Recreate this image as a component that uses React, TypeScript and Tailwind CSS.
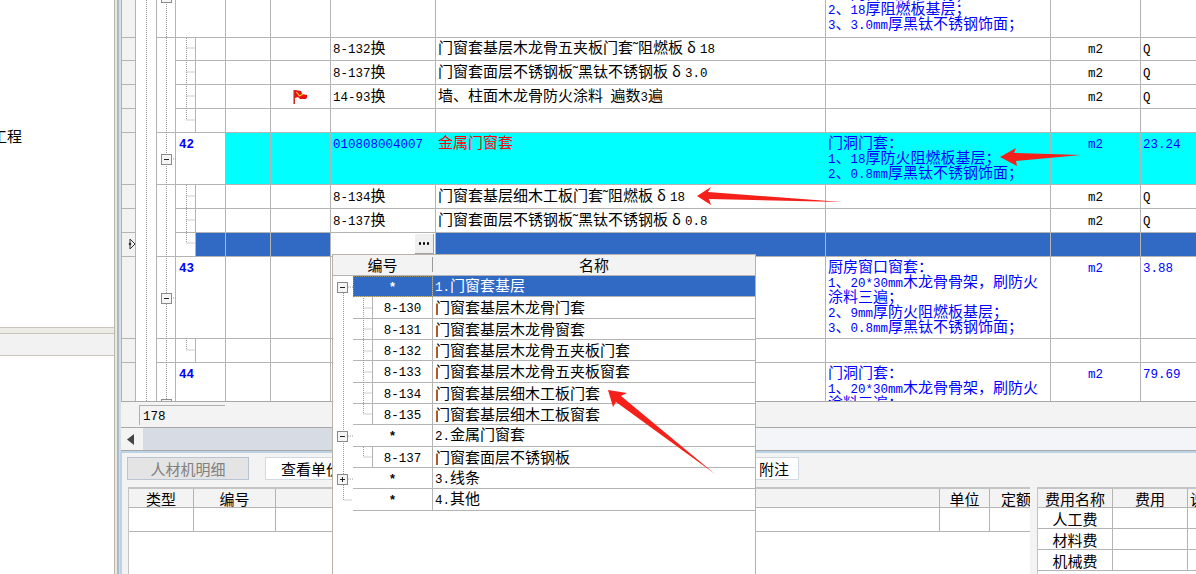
import React from "react";

const CJK = "font-['Noto_Sans_CJK_SC',sans-serif]";

function Mixed({ text }: { text: string }) {
  const parts = text.match(/[\x00-\x7f]+|δ|[^\x00-\x7fδ]+/g) ?? [];
  return (
    <span className="whitespace-pre">
      {parts.map((p, i) =>
        /^[\x00-\x7f]/.test(p) ? (
          <span key={i} className="font-['Liberation_Mono',monospace] text-[12.5px]">
            {p}
          </span>
        ) : p === "δ" ? (
          <span key={i} className="px-[4px]">{p}</span>
        ) : (
          <span key={i}>{p}</span>
        )
      )}
    </span>
  );
}

type RowData = {
  h: number;
  treeEnd?: boolean;
  sub?: boolean;
  num?: string;
  flag?: boolean;
  code?: string;
  name?: string;
  note?: string[];
  unit?: string;
  qty?: string;
  kind?: "cyan" | "sel" | "item" | "head";
  noteShift?: boolean;
};

const rows: RowData[] = [
  { h: 38, kind: "head", note: ["1、门窗基层木龙骨；", "2、18厚阻燃板基层；", "3、3.0mm厚黑钛不锈钢饰面；"], noteShift: true },
  { h: 23, sub: true, code: "8-132换", name: "门窗套基层木龙骨五夹板门套˜阻燃板δ18", unit: "m2", qty: "Q" },
  { h: 24, sub: true, code: "8-137换", name: "门窗套面层不锈钢板˜黑钛不锈钢板δ3.0", unit: "m2", qty: "Q" },
  { h: 24, sub: true, flag: true, code: "14-93换", name: "墙、柱面木龙骨防火涂料 遍数3遍", unit: "m2", qty: "Q" },
  { h: 24, sub: true, treeEnd: true },
  { h: 52, kind: "cyan", num: "42", code: "010808004007", name: "金属门窗套", note: ["门洞门套：", "1、18厚防火阻燃板基层；", "2、0.8mm厚黑钛不锈钢饰面；"], unit: "m2", qty: "23.24" },
  { h: 24, sub: true, code: "8-134换", name: "门窗套基层细木工板门套˜阻燃板δ18", unit: "m2", qty: "Q" },
  { h: 24, sub: true, code: "8-137换", name: "门窗套面层不锈钢板˜黑钛不锈钢板δ0.8", unit: "m2", qty: "Q" },
  { h: 24, sub: true, treeEnd: true, kind: "sel" },
  { h: 82, kind: "head", num: "43", note: ["厨房窗口窗套：", "1、20*30mm木龙骨骨架，刷防火", "涂料三遍；", "2、9mm厚防火阻燃板基层；", "3、0.8mm厚黑钛不锈钢饰面；"], unit: "m2", qty: "3.88" },
  { h: 24, sub: true, treeEnd: true },
  { h: 39, kind: "head", num: "44", note: ["门洞门套：", "1、20*30mm木龙骨骨架，刷防火", "涂料三遍；"], unit: "m2", qty: "79.69" },
];

function GridRow({ r }: { r: RowData }) {
  const cyan = r.kind === "cyan";
  const sel = r.kind === "sel";
  const fill = cyan ? "bg-[#00ffff]" : sel ? "bg-[#316ac5]" : "bg-white";
  const cell = `h-full shrink-0 border-r border-b border-[#b4b4b4] overflow-hidden ${fill}`;
  const blue = r.kind === "cyan" || r.kind === "head";
  const align = blue ? "items-start pt-[1px]" : "items-center pb-[2px]";
  return (
    <div className="flex shrink-0 overflow-hidden" style={{ height: r.h }}>
      <div className="h-full w-[15px] shrink-0 border-b border-x border-[#b4b4b4] bg-[#f2f2f2]" />
      <div className="h-full w-[20px] shrink-0 bg-white" />
      <div className={`h-full w-[20px] shrink-0 border-l border-r bg-white border-[#b4b4b4] ${r.sub && !r.treeEnd && !sel ? "" : "border-b"}`} />
      {r.sub ? (
        <>
          <div className="h-full w-[20px] shrink-0 border-r border-b border-[#b4b4b4] bg-white" />
          <div className={`w-[30px] ${cell}`} />
        </>
      ) : (
        <div className={`w-[50px] pl-[3px] border-r border-b border-[#b4b4b4] h-full shrink-0 bg-white text-[#0000ff] font-bold flex ${align}`}>
          {r.num && <Mixed text={r.num} />}
        </div>
      )}
      <div className={`w-[45px] ${cell}`} />
      <div className={`w-[60px] ${cell} flex items-center justify-center`}>
        {r.flag && (
          <svg width="15" height="15" viewBox="0 0 15 15" aria-hidden="true">
            <rect x="0.5" y="1" width="1.4" height="14" fill="#d01010" />
            <path d="M2 1 L8 2 L9 5 L14 6 Q15 8 13 10 L7 10 L5 8 L2 9 Z" fill="#e81010" />
            <path d="M3.5 3 L6.5 7 L10 5" fill="none" stroke="#f5d020" strokeWidth="1.2" />
          </svg>
        )}
      </div>
      <div className={`w-[105px] pl-[2px] flex ${sel ? "justify-end pr-[1px] pt-[1px] items-start !bg-white" : align} ${cell} ${cyan ? "text-[#0000ff]" : "text-black"}`}>
        {r.code && <Mixed text={r.code} />}
        {sel && (
          <div className="w-[19px] h-[20px] bg-[#efefef] border-r border-b border-[#a0a0a0] flex items-center justify-center gap-[1.5px]">
            <span className="size-[2.5px] bg-black rounded-full" />
            <span className="size-[2.5px] bg-black rounded-full" />
            <span className="size-[2.5px] bg-black rounded-full" />
          </div>
        )}
      </div>
      <div className={`w-[390px] pl-[2px] flex ${align} ${cell} ${cyan ? "text-[#ff0000]" : "text-black"}`}>
        {r.name && <Mixed text={r.name} />}
      </div>
      <div className={`w-[225px] pl-[2px] ${cell} text-[#0000ff]`}>
        {r.note && (
          <div className={r.noteShift ? "-mt-[15px]" : "pt-[1px]"}>
            {r.note.map((n) => (
              <div key={n} className="h-[15px] leading-[15px] whitespace-nowrap">
                <Mixed text={n} />
              </div>
            ))}
          </div>
        )}
      </div>
      <div className={`w-[90px] flex justify-center ${align} ${cell} ${blue ? "text-[#0000ff]" : "text-black"}`}>
        {r.unit && <Mixed text={r.unit} />}
      </div>
      <div className={`flex-1 pl-[2px] flex ${align} ${cell} border-r-0 ${blue ? "text-[#0000ff]" : "text-black"}`}>
        {r.qty && <Mixed text={r.qty} />}
      </div>
    </div>
  );
}

function Box({ x, y, plus }: { x: number; y: number; plus?: boolean }) {
  return (
    <g>
      <rect x={x + 0.5} y={y + 0.5} width="10" height="10" fill="#f5f5f5" stroke="#8a8a8a" />
      <path d={`M${x + 3} ${y + 5.5}H${x + 8}`} stroke="#222" />
      {plus && <path d={`M${x + 5.5} ${y + 3}V${y + 8}`} stroke="#222" />}
    </g>
  );
}

const dot = { stroke: "#9a9a9a", strokeDasharray: "1 1", fill: "none" } as const;

function GridTree() {
  return (
    <svg className="absolute left-0 top-0 pointer-events-none" width="90" height="402" aria-hidden="true">
      <path d="M25.5 0V402M45.5 0V402" {...dot} />
      <path d="M65.5 38V120H74M65.5 48H74M65.5 72H74M65.5 96H74" {...dot} />
      <path d="M65.5 185V243H74M65.5 196H74M65.5 220H74" {...dot} />
      <path d="M65.5 338V350H74" {...dot} />
      <path d="M50 159H55M50 298H55" {...dot} />
      <Box x={40} y={-8} />
      <Box x={40} y={154} />
      <Box x={40} y={293} />
      <Box x={40} y={399} />
      <path d="M9 239L14 244L9 249Z" fill="#f2f2f2" stroke="#333" />
      <circle cx="9" cy="244" r="1.3" fill="#333" />
    </svg>
  );
}

const popupRows: { sub?: boolean; code: string; name: string; sel?: boolean }[] = [
  { code: "*", name: "1.门窗套基层", sel: true },
  { sub: true, code: "8-130", name: "门窗套基层木龙骨门套" },
  { sub: true, code: "8-131", name: "门窗套基层木龙骨窗套" },
  { sub: true, code: "8-132", name: "门窗套基层木龙骨五夹板门套" },
  { sub: true, code: "8-133", name: "门窗套基层木龙骨五夹板窗套" },
  { sub: true, code: "8-134", name: "门窗套基层细木工板门套" },
  { sub: true, code: "8-135", name: "门窗套基层细木工板窗套" },
  { code: "*", name: "2.金属门窗套" },
  { sub: true, code: "8-137", name: "门窗套面层不锈钢板" },
  { code: "*", name: "3.线条" },
  { code: "*", name: "4.其他" },
];

function Popup() {
  return (
    <div className="absolute left-[332px] top-[254px] w-[424px] h-[330px] bg-white border border-[#b7b3a6] text-black z-10">
      <div className="flex h-[21px] bg-[#f3f3f3] border-b border-[#b4b4b4] items-center pb-[1px]">
        <div className="w-[100px] text-center border-r border-[#9a9a9a] h-[15px] leading-[15px]">编号</div>
        <div className="flex-1 text-center leading-[15px]">名称</div>
      </div>
      {popupRows.map((r) => (
        <div key={r.name} className="flex h-[21.33px]">
          <div className="w-[20px] shrink-0" />
          {r.sub && <div className="w-[20px] shrink-0 border-r border-b border-[#b4b4b4]" />}
          <div
            className={`${r.sub ? "w-[60px]" : "w-[80px]"} shrink-0 flex items-center justify-center pb-[1px] border-r border-b border-[#b4b4b4] ${
              r.sel ? "bg-[#316ac5] text-white outline-1 -outline-offset-1 outline-dotted outline-[#9a8f60]" : ""
            }`}
          >
            <span className={r.code === "*" ? "font-bold" : ""}>
              <Mixed text={r.code} />
            </span>
          </div>
          <div
            className={`flex-1 pl-[2px] pb-[1px] flex items-center border-b border-[#b4b4b4] ${
              r.sel ? "bg-[#316ac5] text-white" : ""
            }`}
          >
            <Mixed text={r.name} />
          </div>
        </div>
      ))}
      <svg className="absolute left-0 top-0 pointer-events-none" width="60" height="260" aria-hidden="true">
        <path d="M10.5 28V245H19" {...dot} />
        <path d="M15 32H20M15 181H20M15 224H20" {...dot} />
        <path d="M30.5 43V159H39M30.5 53H39M30.5 74H39M30.5 96H39M30.5 117H39M30.5 138H39" {...dot} />
        <path d="M30.5 192V202H39" {...dot} />
        <Box x={4} y={27} />
        <Box x={4} y={176} />
        <Box x={4} y={219} plus />
      </svg>
    </div>
  );
}

function Th({ w, label, grow }: { w?: number; label?: string; grow?: boolean }) {
  return (
    <div
      className={`h-full flex items-center justify-center overflow-hidden whitespace-nowrap border-r border-[#b4b4b4] ${grow ? "flex-1" : "shrink-0"}`}
      style={w ? { width: w } : undefined}
    >
      {label}
    </div>
  );
}

export default function App() {
  return (
    <div className={`relative flex w-[1196px] h-[574px] overflow-hidden bg-white text-[15px] leading-none ${CJK}`}>
      {/* left tree panel */}
      <aside className="w-[114px] shrink-0 flex flex-col">
        <div className="h-[327px] pt-[128px] -ml-[8px] whitespace-nowrap">
          <span>工程</span>
        </div>
        <div className="h-[7px] bg-[#ecebe6] border-y border-[#c9c5b8]" />
        <div className="h-[22px] bg-[#f2f2f2] border-b border-[#c9c5b8]" />
        <div className="flex-1 bg-white" />
      </aside>
      {/* splitter */}
      <div className="w-[7px] shrink-0 flex">
        <div className="w-[1px] bg-[#bdb9aa]" />
        <div className="w-[2px] bg-[#e8e8e4]" />
        <div className="w-[2px] bg-[#a9b9c6]" />
        <div className="w-[2px] bg-[#d9dee3]" />
      </div>
      {/* main */}
      <main className="flex-1 min-w-0 flex flex-col">
        <section className="relative h-[402px] shrink-0 flex flex-col overflow-hidden border-b border-[#a8a8a8]">
          {rows.map((r, i) => (
            <GridRow key={i} r={r} />
          ))}
          <GridTree />
        </section>
        <div className="h-[26px] shrink-0 bg-[#f3f3f3] pl-[18px] pt-[3px] border-b border-[#a8a8a8]">
          <div className="w-[86px] h-[20px] pl-[3px] pb-[1px] bg-[#f3f3f3] border-l border-t border-[#b0b0b0] flex items-center text-black">
            <Mixed text="178" />
          </div>
        </div>
        <div className="h-[23px] shrink-0 flex border-b border-[#a8a8a8] bg-[#f3f3f3]">
          <div className="w-[22px] flex items-center pl-[6px]">
            <svg width="7" height="11" viewBox="0 0 7 11" aria-hidden="true">
              <path d="M7 0V11L0 5.5Z" fill="#444" />
            </svg>
          </div>
          <div className="w-[400px] bg-[#d6dbe4]" />
          <div className="flex-1 bg-[#f3f5f8]" />
        </div>
        <div className="flex-1 min-h-0 bg-[#f3f3f3] border-l-2 border-t-2 border-[#bcd3e6] -ml-[1px] flex flex-col overflow-hidden">
          <div className="flex h-[23px] mt-[4px] ml-[5px] shrink-0">
            <div className="w-[122px] bg-[#e4e4e4] border border-[#b8c4d4] text-[#808080] flex items-center justify-center">
              人材机明细
            </div>
            <div className="w-[140px] ml-[16px] bg-white border border-[#d0d8e2] flex items-center pl-[15px] text-black">
              查看单价构成
            </div>
            <div className="w-[50px] ml-[344px] bg-white border border-[#d0d8e2] flex items-center justify-end pr-[9px] text-black">
              附注
            </div>
          </div>
          <div className="flex mt-[7px] ml-[6px] flex-1 min-h-0">
            <div className="w-[902px] shrink-0 bg-white border-l border-t-2 border-[#c4c4c4]">
              <div className="flex h-[19px] bg-[#f3f3f3] border-b border-[#b4b4b4]">
                <Th w={65} label="类型" />
                <Th w={82} label="编号" />
                <Th grow />
                <Th w={50} label="单位" />
                <div className="w-[40px] pl-[11px] flex items-center overflow-hidden whitespace-nowrap">定额</div>
              </div>
              <div className="flex h-[24px] border-b border-[#b4b4b4]">
                <Th w={65} />
                <Th w={82} />
                <Th grow />
                <Th w={50} />
                <div className="w-[40px]" />
              </div>
            </div>
            <div className="ml-[7px] flex-1 bg-white border-l border-t-2 border-[#c4c4c4] overflow-hidden">
              <div className="flex h-[19px] bg-[#f3f3f3] border-b border-[#b4b4b4]">
                <Th w={75} label="费用名称" />
                <Th w={75} label="费用" />
                <div className="flex-1 pl-[2px] flex items-center overflow-hidden whitespace-nowrap">说明</div>
              </div>
              {["人工费", "材料费", "机械费"].map((n) => (
                <div key={n} className="flex h-[21px] border-b border-[#b4b4b4]">
                  <Th w={75} label={n} />
                  <Th w={75} />
                  <div className="flex-1" />
                </div>
              ))}
            </div>
          </div>
        </div>
      </main>
      <Popup />
      {/* red annotation arrows */}
      <svg className="absolute left-0 top-0 z-20 pointer-events-none" width="1196" height="574" aria-hidden="true">
        <polygon points="1000,157 1016,148 1014,153 1081,155 1016,161 1017,166" fill="#f5201a" />
        <polygon points="697,196 711,187 708,192 842,202 709,199 711,205" fill="#f5201a" />
        <polygon points="608,390 627,393 621,396 715,474 616,402 613,407" fill="#f5201a" />
      </svg>
    </div>
  );
}
